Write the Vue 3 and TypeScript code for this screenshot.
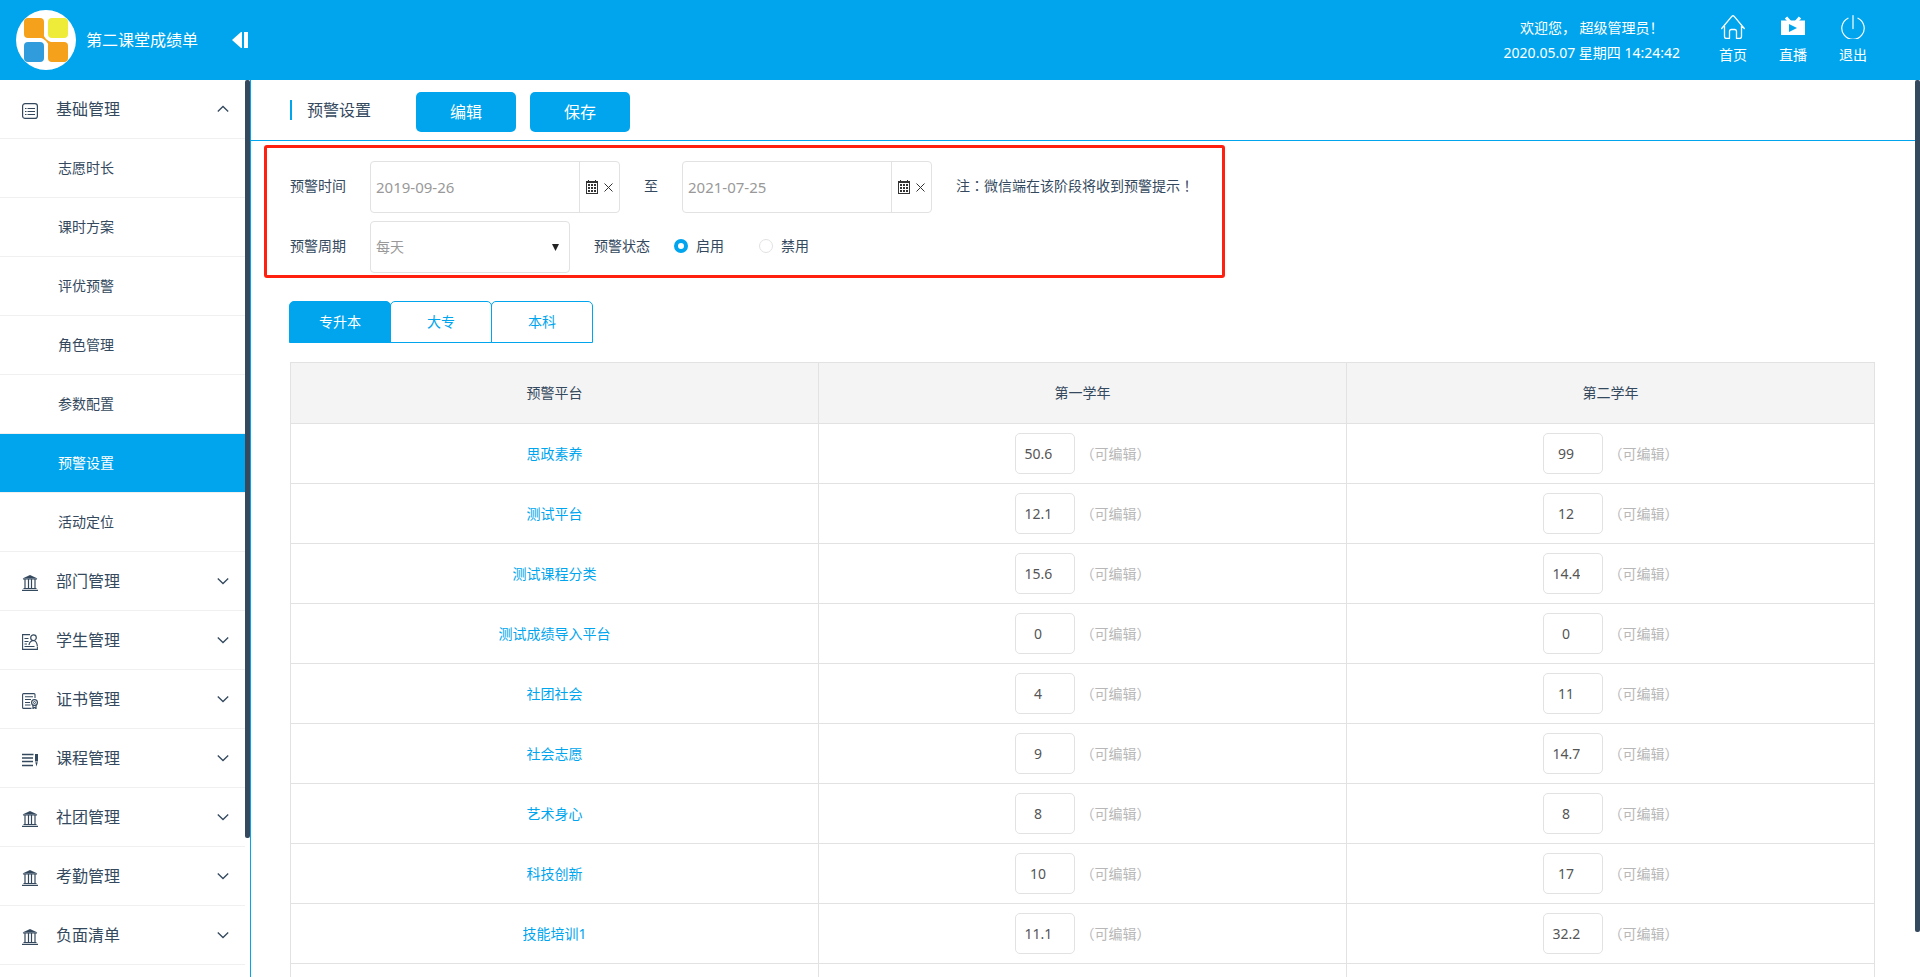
<script setup lang="ts">
import { ref } from 'vue'

interface MenuGroup {
  title: string
  icon: 'list' | 'bank' | 'student' | 'cert' | 'course'
  open?: boolean
  children?: string[]
}

interface WarningRow {
  name: string
  first: string
  second: string
}

const menu: MenuGroup[] = [
  {
    title: '基础管理',
    icon: 'list',
    open: true,
    children: ['志愿时长', '课时方案', '评优预警', '角色管理', '参数配置', '预警设置', '活动定位'],
  },
  { title: '部门管理', icon: 'bank' },
  { title: '学生管理', icon: 'student' },
  { title: '证书管理', icon: 'cert' },
  { title: '课程管理', icon: 'course' },
  { title: '社团管理', icon: 'bank' },
  { title: '考勤管理', icon: 'bank' },
  { title: '负面清单', icon: 'bank' },
]

const activeItem = ref('预警设置')
const tabs = ['专升本', '大专', '本科']
const activeTab = ref('专升本')
const startDate = ref('2019-09-26')
const endDate = ref('2021-07-25')
const cycle = ref('每天')
const status = ref('on')

const rows = ref<WarningRow[]>([
  { name: '思政素养', first: '50.6', second: '99' },
  { name: '测试平台', first: '12.1', second: '12' },
  { name: '测试课程分类', first: '15.6', second: '14.4' },
  { name: '测试成绩导入平台', first: '0', second: '0' },
  { name: '社团社会', first: '4', second: '11' },
  { name: '社会志愿', first: '9', second: '14.7' },
  { name: '艺术身心', first: '8', second: '8' },
  { name: '科技创新', first: '10', second: '17' },
  { name: '技能培训1', first: '11.1', second: '32.2' },
])
</script>

<template>
  <div class="page">
    <header class="topbar">
      <svg class="logo" viewBox="0 0 60 60" aria-hidden="true">
        <circle cx="30" cy="30" r="30" fill="#fff" />
        <path d="M27 23q1 7 10 10l-4 4q-1-7-10-10z" fill="#f5a11c" />
        <rect x="8" y="8" width="20" height="20" rx="4" fill="#f5a11c" />
        <rect x="32" y="8" width="20" height="20" rx="4" fill="#eeeb39" />
        <rect x="8" y="32" width="20" height="20" rx="4" fill="#309cdc" />
        <rect x="32" y="32" width="20" height="20" rx="4" fill="#f5a11c" />
      </svg>
      <span class="brand">第二课堂成绩单</span>
      <button class="collapse" type="button" aria-label="收起菜单">
        <svg width="16" height="16" viewBox="0 0 16 16"><path d="M0 8 9 0h1v16H9zM12 0h4v16h-4z" fill="#fff" /></svg>
      </button>
      <div class="welcome">
        <span>欢迎您， 超级管理员！</span>
        <span>2020.05.07 星期四 14:24:42</span>
      </div>
      <nav class="quick">
        <a href="#">
          <svg width="24" height="24" viewBox="0 0 24 24" fill="none" stroke="#fff" stroke-width="1.3" stroke-linecap="round" stroke-linejoin="round">
            <path d="M.7 13.5 11 1.2q1-.9 2 0l10.300 12.300M3.500 11v10.500q0 2 2 2h3v-7q0-2 2-2h3q2 0 2 2v7h3q2 0 2-2V11" />
          </svg>
          首页
        </a>
        <a href="#">
          <svg width="24" height="24" viewBox="0 0 24 24">
            <path d="M5 2.500 9 7M19 2.500 15 7" stroke="#fff" stroke-width="3.200" />
            <path fill="#fff" fill-rule="evenodd" d="M0 5.500h24v14.500H0zM8 9v8l8-4z" />
          </svg>
          直播
        </a>
        <a href="#">
          <svg width="24" height="24" viewBox="0 0 24 24" fill="none" stroke="#fff" stroke-width="1.200" stroke-linecap="round">
            <path d="M12 .600v13M7 3.200a11.200 11.200 0 1 0 10 0" />
          </svg>
          退出
        </a>
      </nav>
    </header>

    <div class="body">
      <aside class="sidebar">
        <ul class="menu">
          <li v-for="group in menu" :key="group.title">
            <button class="group" type="button" :aria-expanded="!!group.open">
              <svg class="group-icon" width="16" height="16" viewBox="0 0 16 16" fill="none" stroke="#34495e">
                <template v-if="group.icon === 'list'">
                  <rect x=".600" y=".600" width="14.800" height="14.800" rx="2.500" stroke-width="1.200" />
                  <path d="M3 5.500h1.500M3 8.500h1.500M3 11.500h1.500M5.500 5.500h7.500M5.500 8.500h7.500M5.500 11.500h7.500" />
                </template>
                <template v-else-if="group.icon === 'bank'">
                  <path d="M8 0 15.500 3.600H.500z" fill="#34495e" stroke="none" />
                  <path d="M1 4h14M3 4v10M6.500 4v10M9.500 4v10M13 4v10M0 15.300h16M1.500 13.500h13" stroke-width="1.200" />
                </template>
                <template v-else-if="group.icon === 'student'">
                  <path d="M8 .600H.600v14.800h14.800V13M2.500 4.500h4M2.500 7.500h4M2.500 10h2.500M2.500 12.500h10" stroke-width="1.100" />
                  <circle cx="11.500" cy="3.700" r="2.800" stroke-width="1.200" />
                  <path d="M7 11q.500-4 4.500-4.500 3.500.500 3.900 6" stroke-width="1.200" />
                </template>
                <template v-else-if="group.icon === 'cert'">
                  <path d="M13 5V1.600q0-1-1-1H1.600q-1 0-1 1v12.800q0 1 1 1H9.500M3 3.700h8M3 6.500h6M3 9.500h5M3 12h5.500" stroke-width="1.100" />
                  <circle cx="12.500" cy="9.500" r="2.900" stroke-width="1.200" />
                  <circle cx="12.500" cy="9.500" r="1" />
                  <path d="M11 12v3.500l1.500-1 1.500 1V12" stroke-width="1.200" />
                </template>
                <template v-else>
                  <path d="M0 2.500h11.500M0 6h11M0 9.500h11M0 13.500h11" stroke-width="1.300" />
                  <path d="M13 2h3v7.500h-3zM13.300 10.200h2.400l-1.200 4.300z" fill="#34495e" stroke="none" />
                </template>
              </svg>
              <span class="group-title">{{ group.title }}</span>
              <svg width="12" height="8" viewBox="0 0 12 8" fill="none" stroke="#34495e" stroke-width="1.300">
                <path :d="group.open ? 'M.800 6.500 6 1.500l5.200 5' : 'M.800 1.500 6 6.500l5.200-5'" />
              </svg>
            </button>
            <ul v-if="group.children" class="menu">
              <li v-for="item in group.children" :key="item">
                <a href="#" class="item" :class="{ active: item === activeItem }" @click.prevent="activeItem = item">{{ item }}</a>
              </li>
            </ul>
          </li>
        </ul>
        <div class="track"><div class="thumb side-thumb"></div></div>
      </aside>

      <main class="content">
        <div class="scroll">
          <div class="titlebar">
            <h1>预警设置</h1>
            <button class="action" type="button">编辑</button>
            <button class="action" type="button">保存</button>
          </div>

          <form class="settings" @submit.prevent>
            <div class="line">
              <label for="start">预警时间</label>
              <div class="date">
                <input id="start" v-model="startDate" type="text" />
                <div class="date-tools">
                  <button type="button" aria-label="选择开始日期">
                    <svg width="12" height="14" viewBox="0 0 12 14" fill="#333"><path fill-rule="evenodd" d="M0 1h2V0h1v1h6V0h1v1h2v13H0zM1 3v10h10V3z" /><path d="M2 4h2v2H2zM5 4h2v2H5zM8 4h2v2H8zM2 7h2v2H2zM5 7h2v2H5zM8 7h2v2H8zM2 10h2v2H2zM5 10h2v2H5zM8 10h2v2H8z" /></svg>
                  </button>
                  <button type="button" aria-label="清除开始日期">
                    <svg width="9" height="9" viewBox="0 0 9 9" stroke="#333"><path d="m.500.500 8 8M8.500.500l-8 8" /></svg>
                  </button>
                </div>
              </div>
              <label for="end">至</label>
              <div class="date">
                <input id="end" v-model="endDate" type="text" />
                <div class="date-tools">
                  <button type="button" aria-label="选择结束日期">
                    <svg width="12" height="14" viewBox="0 0 12 14" fill="#333"><path fill-rule="evenodd" d="M0 1h2V0h1v1h6V0h1v1h2v13H0zM1 3v10h10V3z" /><path d="M2 4h2v2H2zM5 4h2v2H5zM8 4h2v2H8zM2 7h2v2H2zM5 7h2v2H5zM8 7h2v2H8zM2 10h2v2H2zM5 10h2v2H5zM8 10h2v2H8z" /></svg>
                  </button>
                  <button type="button" aria-label="清除结束日期">
                    <svg width="9" height="9" viewBox="0 0 9 9" stroke="#333"><path d="m.500.500 8 8M8.500.500l-8 8" /></svg>
                  </button>
                </div>
              </div>
              <span class="centered-marks">注：微信端在该阶段将收到预警提示！</span>
            </div>
            <div class="line">
              <label for="cycle">预警周期</label>
              <div class="select">
                <select id="cycle" v-model="cycle">
                  <option>每天</option>
                </select>
                <svg width="7" height="7" viewBox="0 0 7 7"><path d="M0 0h7L3.500 7z" fill="#222" /></svg>
              </div>
              <span id="status-label">预警状态</span>
              <div class="radios" role="radiogroup" aria-labelledby="status-label">
                <label><input v-model="status" type="radio" name="status" value="on" />启用</label>
                <label><input v-model="status" type="radio" name="status" value="off" />禁用</label>
              </div>
            </div>
          </form>

          <div class="tabs" role="tablist">
            <button
              v-for="tab in tabs"
              :key="tab"
              type="button"
              role="tab"
              :aria-selected="tab === activeTab"
              :class="{ active: tab === activeTab }"
              @click="activeTab = tab"
            >{{ tab }}</button>
          </div>

          <div class="table-wrap">
            <table>
              <thead>
                <tr>
                  <th>预警平台</th>
                  <th>第一学年</th>
                  <th>第二学年</th>
                </tr>
              </thead>
              <tbody>
                <tr v-for="row in rows" :key="row.name">
                  <td><a href="#">{{ row.name }}</a></td>
                  <td>
                    <label class="score"><input v-model="row.first" type="text" /><span class="centered-marks">（可编辑）</span></label>
                  </td>
                  <td>
                    <label class="score"><input v-model="row.second" type="text" /><span class="centered-marks">（可编辑）</span></label>
                  </td>
                </tr>
                <tr>
                  <td></td>
                  <td></td>
                  <td></td>
                </tr>
              </tbody>
            </table>
          </div>
        </div>
        <div class="track"><div class="thumb main-thumb"></div></div>
      </main>
    </div>
  </div>
</template>

<style>
body {
  overflow: hidden;
}
</style>

<style scoped>
.page,
.page * {
  box-sizing: border-box;
}

.page {
  display: flex;
  flex-direction: column;
  height: 100vh;
  background: #fff;
  color: #34495e;
  font: 14px/20px "Noto Sans", "Noto Sans CJK SC", sans-serif;
}

.centered-marks {
  font-family: "Noto Sans", "Noto Sans CJK TC", sans-serif;
}

button,
input,
select {
  margin: 0;
  padding: 0;
  border: 0;
  background: none;
  color: inherit;
  font: inherit;
}

button {
  cursor: pointer;
}

a {
  color: inherit;
  text-decoration: none;
}

svg {
  display: block;
  flex: none;
}

/* Header */
.topbar {
  display: flex;
  flex: none;
  align-items: center;
  height: 80px;
  padding: 0 53px 0 16px;
  background: #00a5ee;
  color: #fff;
}

.logo {
  width: 60px;
  height: 60px;
}

.brand {
  margin: 0 34px 0 10px;
  font-size: 16px;
}

.welcome {
  display: flex;
  flex-direction: column;
  align-items: center;
  margin-left: auto;
  line-height: 25px;
}

.quick {
  display: flex;
  gap: 32px;
  margin-left: 39px;
}

.quick a {
  display: flex;
  flex-direction: column;
  align-items: center;
  gap: 6px;
}

/* Sidebar */
.body {
  display: flex;
  flex: 1;
  min-height: 0;
}

.sidebar {
  display: flex;
  flex: none;
  width: 251px;
  overflow: hidden;
  border-right: 1px solid #00a5ee;
}

.menu {
  flex: 1;
  margin: 0;
  padding: 0;
  list-style: none;
}

.group {
  display: flex;
  align-items: center;
  width: 100%;
  height: 59px;
  padding: 0 16px 0 22px;
  border-bottom: 1px solid #f0f0f0;
  font-size: 16px;
  text-align: left;
}

.group-icon {
  margin-top: 4px;
}

.group-title {
  flex: 1;
  padding-left: 18px;
}

.item {
  display: flex;
  align-items: center;
  height: 59px;
  padding-left: 58px;
  border-bottom: 1px solid #f0f0f0;
}

.item.active {
  background: #00a5ee;
  background-clip: padding-box;
  color: #fff;
}

.track {
  flex: none;
  width: 5px;
}

.thumb {
  border-radius: 2px;
  background: #34495e;
}

.side-thumb {
  height: 84.5%;
}

.main-thumb {
  height: 95%;
}

/* Content */
.content {
  display: flex;
  flex: 1;
  min-width: 0;
}

.scroll {
  flex: 1;
  min-width: 0;
  overflow: hidden;
}

.titlebar {
  display: flex;
  align-items: center;
  height: 61px;
  padding: 4px 0 0 39px;
  border-bottom: 1px solid #00a5ee;
}

h1 {
  margin: 0 45px 4px 0;
  padding-left: 15px;
  border-left: 2px solid #00a5ee;
  font-size: 16px;
  font-weight: 400;
}

.action {
  width: 100px;
  height: 40px;
  margin-right: 14px;
  border-radius: 5px;
  background: #00a5ee;
  color: #fff;
  font-size: 16px;
}

.settings {
  display: flex;
  flex-direction: column;
  gap: 8px;
  width: fit-content;
  margin: 4px 0 0 13px;
  padding: 13px 28px 2px 23px;
  border: 3px solid #ff2010;
  border-radius: 3px;
}

.line {
  display: flex;
  align-items: center;
  gap: 24px;
}

.line > label,
.line > span,
.radios {
  padding-bottom: 2px;
}

.date,
.select {
  display: flex;
  align-items: center;
  height: 52px;
  border: 1px solid #e2e2e2;
  border-radius: 4px;
}

.date {
  width: 250px;
}

.date input {
  flex: 1;
  min-width: 0;
  height: 100%;
  padding-left: 5px;
  color: #999;
  font-size: 15px;
}

.date-tools {
  display: flex;
  align-items: center;
  gap: 6px;
  width: 40px;
  height: 100%;
  padding-left: 6px;
  border-left: 1px solid #e2e2e2;
}

.select {
  position: relative;
  width: 200px;
}

.select select {
  width: 100%;
  height: 100%;
  padding-left: 5px;
  appearance: none;
  color: #999;
}

.select svg {
  position: absolute;
  right: 10px;
  pointer-events: none;
}

.radios {
  display: flex;
  gap: 35px;
}

.radios label {
  display: flex;
  align-items: center;
  gap: 8px;
}

.radios input {
  width: 14px;
  height: 14px;
  border: 1px solid #e2e2e2;
  border-radius: 50%;
  appearance: none;
}

.radios input:checked {
  border: 4px solid #00a5ee;
}

.tabs {
  display: flex;
  margin: 23px 0 0 38px;
}

.tabs button {
  width: 102px;
  height: 42px;
  border: 1px solid #00a5ee;
  border-radius: 5px 5px 0 0;
  color: #00a5ee;
}

.tabs button + button {
  margin-left: -1px;
}

.tabs .active {
  background: #00a5ee;
  color: #fff;
}

.table-wrap {
  padding: 19px 40px 0 39px;
}

table {
  width: 100%;
  border-collapse: collapse;
  table-layout: fixed;
}

th,
td {
  height: 60px;
  padding: 0;
  border: 1px solid #e2e2e2;
  text-align: center;
}

th {
  height: 61px;
  background: #f4f4f4;
  font-weight: 400;
}

td a {
  color: #00a5ee;
}

.score {
  display: flex;
  align-items: center;
  justify-content: center;
  gap: 6px;
  color: #b8b8b8;
}

.score input {
  width: 60px;
  height: 41px;
  padding: 0 22px 0 9px;
  border: 1px solid #e2e2e2;
  border-radius: 5px;
  color: #555;
  text-align: center;
}
</style>
